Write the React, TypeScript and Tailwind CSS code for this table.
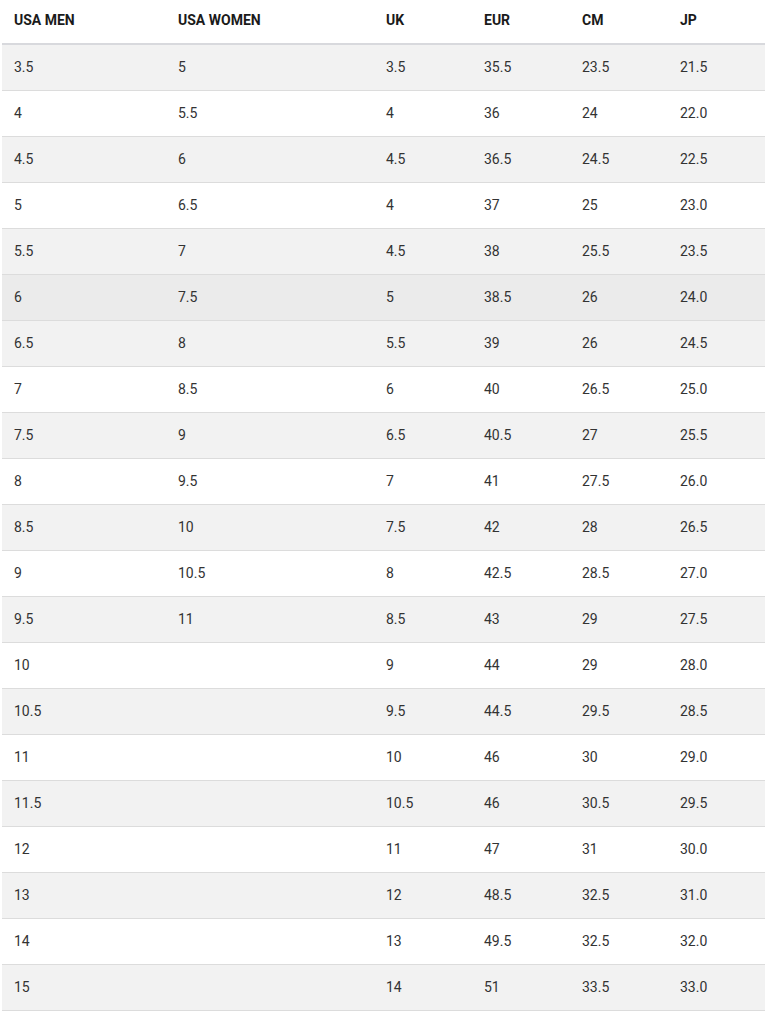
import React from "react";

const rows: string[][] = [
  ["3.5", "5", "3.5", "35.5", "23.5", "21.5"],
  ["4", "5.5", "4", "36", "24", "22.0"],
  ["4.5", "6", "4.5", "36.5", "24.5", "22.5"],
  ["5", "6.5", "4", "37", "25", "23.0"],
  ["5.5", "7", "4.5", "38", "25.5", "23.5"],
  ["6", "7.5", "5", "38.5", "26", "24.0"],
  ["6.5", "8", "5.5", "39", "26", "24.5"],
  ["7", "8.5", "6", "40", "26.5", "25.0"],
  ["7.5", "9", "6.5", "40.5", "27", "25.5"],
  ["8", "9.5", "7", "41", "27.5", "26.0"],
  ["8.5", "10", "7.5", "42", "28", "26.5"],
  ["9", "10.5", "8", "42.5", "28.5", "27.0"],
  ["9.5", "11", "8.5", "43", "29", "27.5"],
  ["10", "", "9", "44", "29", "28.0"],
  ["10.5", "", "9.5", "44.5", "29.5", "28.5"],
  ["11", "", "10", "46", "30", "29.0"],
  ["11.5", "", "10.5", "46", "30.5", "29.5"],
  ["12", "", "11", "47", "31", "30.0"],
  ["13", "", "12", "48.5", "32.5", "31.0"],
  ["14", "", "13", "49.5", "32.5", "32.0"],
  ["15", "", "14", "51", "33.5", "33.0"],
];

const headers = ["USA MEN", "USA WOMEN", "UK", "EUR", "CM", "JP"];

export default function App() {
  return (
    <div className="w-[765px] bg-white pl-[2px]" style={{ fontFamily: "Roboto, 'Liberation Sans', sans-serif" }}>
      <div className="grid grid-cols-[164px_208px_98px_98px_98px_1fr] h-[45px] items-center border-b-2 border-[#d8d9dd] text-[14px] font-bold text-[#1a1a1a]">
        {headers.map((h) => (
          <div key={h} className="pl-[12px] pb-[2px]">{h}</div>
        ))}
      </div>
      {rows.map((r, i) => {
        const bg = i === 5 ? "bg-[#ebebeb]" : i % 2 === 0 ? "bg-[#f2f2f2]" : "bg-white";
        return (
          <div
            key={i}
            className={`grid grid-cols-[164px_208px_98px_98px_98px_1fr] h-[46px] items-center border-b border-[#dcdcdc] text-[14px] text-[#333333] ${bg}`}
          >
            {r.map((c, j) => (
              <div key={j} className="pl-[12px]">{c}</div>
            ))}
          </div>
        );
      })}
    </div>
  );
}
